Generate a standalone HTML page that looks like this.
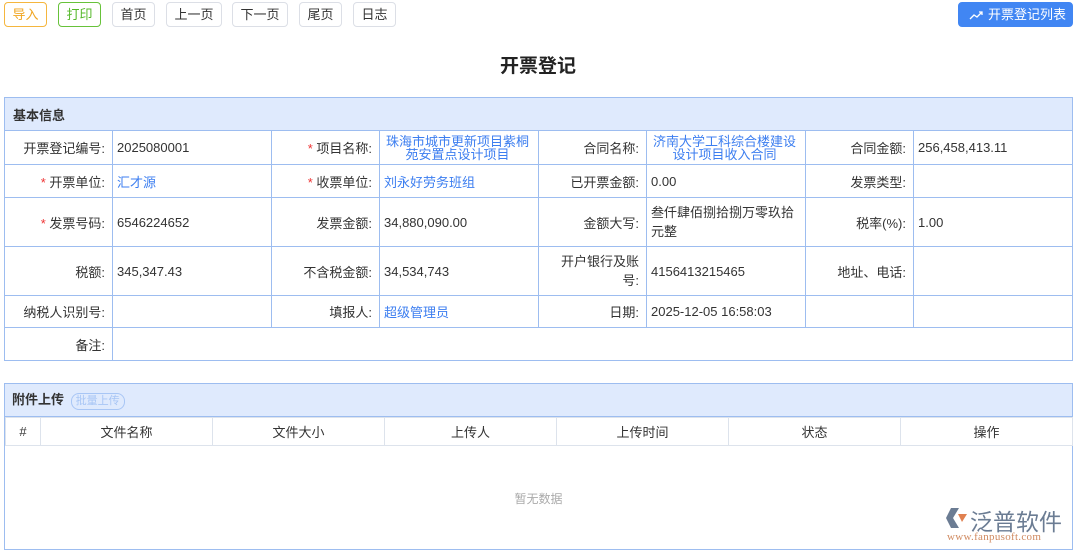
<!DOCTYPE html>
<html><head><meta charset="utf-8"><style>
*{box-sizing:border-box;margin:0;padding:0}
body{width:1076px;height:551px;background:#fff;font-family:"Liberation Sans","Noto Sans CJK SC",sans-serif;font-size:13px;color:#333;position:relative;overflow:hidden}
.btn{position:absolute;top:2px;height:25px;border:1px solid #dcdfe6;border-radius:4px;font-size:13px;line-height:23px;text-align:center;color:#333;background:#fff}
.title{position:absolute;top:51px;left:0;width:1076px;text-align:center;font-size:19px;font-weight:bold;color:#222}
table{position:absolute;border-collapse:collapse;table-layout:fixed}
td{border:1px solid #9dbdf0;padding:0 7px 0 4px;font-size:13px}
td.l{text-align:right}
.b{color:#3c7ef0}
.r{color:#e33}
.hd{background:#dfeafd;font-weight:bold;font-size:13px;padding-left:8px}
.lk{color:#3c7ef0;text-align:center;line-height:13px;font-size:13px}
th{border:1px solid #dde3ec;font-weight:normal;color:#333;height:28px;font-size:13px}
</style></head><body>
<div class="btn" style="left:4px;width:43px;border-color:#f5b63e;color:#f0a520">导入</div>
<div class="btn" style="left:58px;width:43px;border-color:#67c23a;color:#55b82a">打印</div>
<div class="btn" style="left:112px;width:43px">首页</div>
<div class="btn" style="left:166px;width:56px">上一页</div>
<div class="btn" style="left:232px;width:56px">下一页</div>
<div class="btn" style="left:299px;width:43px">尾页</div>
<div class="btn" style="left:353px;width:43px">日志</div>
<div class="btn" style="left:958px;width:115px;background:#4186f3;border-color:#4186f3;color:#fff;text-align:left;padding-left:29px">开票登记列表
<svg style="position:absolute;left:10px;top:7px" width="14" height="10" viewBox="0 0 14 10"><path d="M1 9 L5 5 L8 7 L13 2 M10 2 H13 V5" stroke="#fff" stroke-width="1.3" fill="none"/></svg></div>
<div class="title">开票登记</div>

<table style="left:4px;top:97px;width:1068px">
<colgroup><col style="width:108px"><col style="width:159px"><col style="width:108px"><col style="width:159px"><col style="width:108px"><col style="width:159px"><col style="width:108px"><col style="width:159px"></colgroup>
<tr style="height:33px"><td colspan="8" class="hd">基本信息</td></tr>
<tr style="height:34px"><td class="l">开票登记编号:</td><td>2025080001</td><td class="l"><span class="r">*</span> 项目名称:</td><td class="lk">珠海市城市更新项目紫桐苑安置点设计项目</td><td class="l">合同名称:</td><td class="lk">济南大学工科综合楼建设设计项目收入合同</td><td class="l">合同金额:</td><td>256,458,413.11</td></tr>
<tr style="height:33px"><td class="l"><span class="r">*</span> 开票单位:</td><td class="b">汇才源</td><td class="l"><span class="r">*</span> 收票单位:</td><td class="b">刘永好劳务班组</td><td class="l">已开票金额:</td><td>0.00</td><td class="l">发票类型:</td><td></td></tr>
<tr style="height:49px"><td class="l"><span class="r">*</span> 发票号码:</td><td>6546224652</td><td class="l">发票金额:</td><td>34,880,090.00</td><td class="l">金额大写:</td><td style="line-height:19px">叁仟肆佰捌拾捌万零玖拾元整</td><td class="l">税率(%):</td><td>1.00</td></tr>
<tr style="height:49px"><td class="l">税额:</td><td>345,347.43</td><td class="l">不含税金额:</td><td>34,534,743</td><td class="l" style="line-height:19px">开户银行及账<br>号:</td><td>4156413215465</td><td class="l">地址、电话:</td><td></td></tr>
<tr style="height:32px"><td class="l">纳税人识别号:</td><td></td><td class="l">填报人:</td><td class="b">超级管理员</td><td class="l">日期:</td><td>2025-12-05 16:58:03</td><td></td><td></td></tr>
<tr style="height:33px"><td class="l">备注:</td><td colspan="7"></td></tr>
</table>

<div style="position:absolute;left:4px;top:383px;width:1069px;height:167px;border:1px solid #9dbdf0">
<div style="height:33px;background:#dfeafd;font-weight:bold;line-height:32px;padding-left:7px;border-bottom:1px solid #9dbdf0">附件上传 <span style="display:inline-block;font-weight:normal;font-size:11px;color:#a8c6f5;border:1px solid #a8c6f5;border-radius:8px;line-height:15px;padding:0 4px;margin-left:3px">批量上传</span></div>
<table style="position:static;width:1067px">
<colgroup><col style="width:35px"><col style="width:172px"><col style="width:172px"><col style="width:172px"><col style="width:172px"><col style="width:172px"><col style="width:172px"></colgroup>
<tr><th>#</th><th>文件名称</th><th>文件大小</th><th>上传人</th><th>上传时间</th><th>状态</th><th>操作</th></tr>
</table>
<div style="text-align:center;color:#aaa;font-size:12px;margin-top:44px">暂无数据</div>
</div>
<div style="position:absolute;left:945px;top:504px;width:125px">
<svg style="position:absolute;left:0;top:2px" width="24" height="24" viewBox="0 0 24 24"><path d="M6 2 H14 L8 12 L14 22 H6 L1 12Z" fill="#6b7c93"/><path d="M13 8 L22 8 L17 16 Z" fill="#e08050"/></svg>
<div style="position:absolute;left:25px;top:-1px;font-size:23px;color:#6b7c93;letter-spacing:0px;white-space:nowrap">泛普软件</div>
<div style="position:absolute;left:2px;top:27px;font-size:11px;color:#d08a60;font-family:'Liberation Serif',serif;white-space:nowrap;letter-spacing:0.3px">www.fanpusoft.com</div>
</div>
</body></html>
